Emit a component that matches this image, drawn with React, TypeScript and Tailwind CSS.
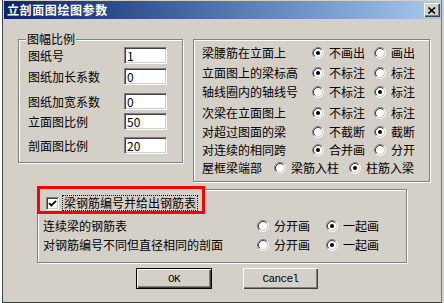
import clsx from 'clsx'

const FIELDS = [
  { label: '图纸号', value: '1', mt: 'mt-[7px]' },
  { label: '图纸加长系数', value: '0', mt: 'mt-[4px]' },
  { label: '图纸加宽系数', value: '0', mt: 'mt-[8px]' },
  { label: '立面图比例', value: '50', mt: 'mt-[3px]' },
  { label: '剖面图比例', value: '20', mt: 'mt-[7px]' },
] as const

const OPTION_ROWS = [
  { label: '梁腰筋在立面上', a: '不画出', b: '画出', on: 0, mt: 'mt-[4px]', lw: 'w-[110px]', ow: 'w-[62px]' },
  { label: '立面图上的梁标高', a: '不标注', b: '标注', on: 0, mt: 'mt-[2px]', lw: 'w-[110px]', ow: 'w-[62px]' },
  { label: '轴线圈内的轴线号', a: '不标注', b: '标注', on: 1, mt: 'mt-[1px]', lw: 'w-[110px]', ow: 'w-[62px]' },
  { label: '次梁在立面图上', a: '不标注', b: '标注', on: 0, mt: 'mt-[3px]', lw: 'w-[110px]', ow: 'w-[62px]' },
  { label: '对超过图面的梁', a: '不截断', b: '截断', on: 1, mt: 'mt-[1px]', lw: 'w-[110px]', ow: 'w-[62px]' },
  { label: '对连续的相同跨', a: '合并画', b: '分开', on: 0, mt: 'mt-0', lw: 'w-[110px]', ow: 'w-[62px]' },
  { label: '屋框梁端部', a: '梁筋入柱', b: '柱筋入梁', on: 1, mt: 'mt-0', lw: 'w-[72px]', ow: 'w-[75px]' },
] as const

const TABLE_ROWS = [
  { label: '连续梁的钢筋表', mt: 'mt-[27px]' },
  { label: '对钢筋编号不同但直径相同的剖面', mt: 'mt-[1px]' },
] as const

// Classic etched frame: grey line with a white line beside it.
const ETCHED = 'border border-[#808080] shadow-[inset_1px_1px_0_#fff,1px_1px_0_#fff]'

function Radio({ on }: { on?: boolean }) {
  return (
    <svg width="12" height="12" viewBox="0 0 12 12" className="shrink-0">
      <circle cx="6" cy="6" r="4.5" fill="#fff" />
      <path d="M2.11 9.89A5.5 5.5 0 0 1 9.89 2.11" fill="none" stroke="#808080" />
      <path d="M9.89 2.11A5.5 5.5 0 0 1 2.11 9.89" fill="none" stroke="#fff" />
      <path d="M2.82 9.18A4.5 4.5 0 0 1 9.18 2.82" fill="none" stroke="#404040" />
      <path d="M9.18 2.82A4.5 4.5 0 0 1 2.82 9.18" fill="none" stroke="#d4d0c8" />
      {on && <circle cx="6" cy="6" r="2" fill="#000" />}
    </svg>
  )
}

function Option({ label, on, className }: { label: string; on?: boolean; className?: string }) {
  return (
    <div className={clsx('flex items-center gap-[5px]', className)}>
      <Radio on={on} />
      <span>{label}</span>
    </div>
  )
}

export default function App() {
  return (
    <div className="flex h-[303px] w-[444px] overflow-hidden bg-[#d4d0c8] font-['Noto_Sans_CJK_SC','Noto_Sans_CJK_JP',sans-serif] text-[12px] leading-[12px] text-black">
      <div aria-hidden="true" className="w-[3px] border-r border-[#404040] bg-white" />
      <div className="flex w-[439px] flex-col border-r border-b border-r-[#808080] border-b-[#404040]">
        {/* Title bar */}
        <div className="ml-[1px] mt-[1px] flex h-[18px] items-center bg-gradient-to-r from-[#0a246a] to-[#a6caf0] pl-[3px] pr-[1px]">
          <span className="font-bold tracking-[0.6px] text-white">立剖面图绘图参数</span>
          <button className="ml-auto flex h-[14px] w-[16px] items-center justify-center bg-[#d4d0c8] shadow-[inset_1px_1px_0_#fff,inset_-1px_-1px_0_#404040,inset_-2px_-2px_0_#808080]">
            <svg width="8" height="7" viewBox="0 0 8 7">
              <path d="M0.5 0.5L7 6.5M7 0.5L0.5 6.5" stroke="#000" strokeWidth="1.6" />
            </svg>
          </button>
        </div>

        <div className="mt-[20px] flex items-start">
          {/* 图幅比例 */}
          <div className={clsx('relative ml-[15px] h-[124px] w-[165px] pl-[9px]', ETCHED)}>
            <span className="absolute -top-[7px] left-[7px] bg-[#d4d0c8] px-[1px]">图幅比例</span>
            {FIELDS.map((f) => (
              <div key={f.label} className={clsx('flex h-[17px] items-center', f.mt)}>
                <span className="w-[96px]">{f.label}</span>
                <div className="h-[17px] w-[43px] border border-t-[#808080] border-l-[#808080] border-b-white border-r-white bg-white pl-[2px] leading-[15px] shadow-[inset_1px_1px_0_#404040,inset_-1px_-1px_0_#d4d0c8]">
                  {f.value}
                </div>
              </div>
            ))}
          </div>

          {/* Display options */}
          <div className={clsx('ml-[10px] h-[143px] w-[237px] pl-[8px]', ETCHED)}>
            {OPTION_ROWS.map((r) => (
              <div key={r.label} className={clsx('flex h-[18px] items-center', r.mt)}>
                <span className={r.lw}>{r.label}</span>
                <Option label={r.a} on={r.on === 0} className={r.ow} />
                <Option label={r.b} on={r.on === 1} />
              </div>
            ))}
          </div>
        </div>

        {/* 钢筋表 */}
        <div className={clsx('relative ml-[34px] mt-[7px] h-[74px] w-[370px] pl-[5px]', ETCHED)}>
          <div className="absolute -left-[1px] -top-[4px] flex h-[28px] w-[168px] items-center gap-[3px] border-[3px] border-[#ff0000] bg-[#d4d0c8] pl-[6px] pt-[6px]">
            <div className="flex h-[13px] w-[13px] items-center justify-center border border-t-[#808080] border-l-[#808080] border-b-white border-r-white bg-white shadow-[inset_1px_1px_0_#404040,inset_-1px_-1px_0_#d4d0c8]">
              <svg width="9" height="9" viewBox="0 0 9 9">
                <path d="M1 4.2L3.3 6.5L8 1.8" fill="none" stroke="#000" strokeWidth="1.8" />
              </svg>
            </div>
            <span className="flex h-[16px] items-center border border-dotted border-black px-[1px]">
              梁钢筋编号并给出钢筋表
            </span>
          </div>
          {TABLE_ROWS.map((r) => (
            <div key={r.label} className={clsx('flex h-[18px] items-center', r.mt)}>
              <span className="w-[214px]">{r.label}</span>
              <Option label="分开画" className="w-[69px]" />
              <Option label="一起画" on />
            </div>
          ))}
        </div>

        {/* Buttons */}
        <div className="ml-[133px] mt-[5px] flex gap-[31px] font-['Liberation_Mono',monospace] text-[11px] tracking-[-0.6px]">
          <button className="h-[21px] w-[76px] border border-black bg-[#d4d0c8] shadow-[inset_1px_1px_0_#fff,inset_-1px_-1px_0_#404040,inset_-2px_-2px_0_#808080]">
            OK
          </button>
          <button className="h-[21px] w-[75px] bg-[#d4d0c8] shadow-[inset_1px_1px_0_#fff,inset_-1px_-1px_0_#404040,inset_-2px_-2px_0_#808080]">
            Cancel
          </button>
        </div>
      </div>
    </div>
  )
}
